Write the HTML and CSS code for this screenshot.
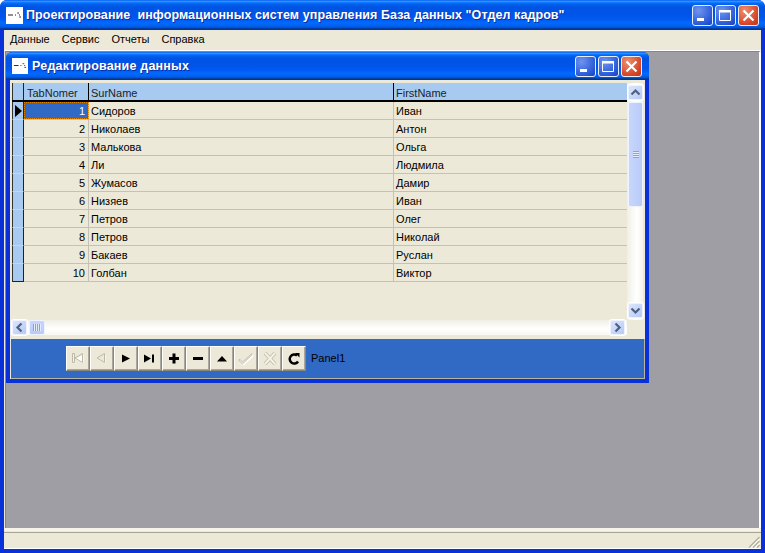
FILE: index.html
```html
<!DOCTYPE html>
<html lang="ru">
<head>
<meta charset="utf-8">
<title>Проектирование информационных систем</title>
<link rel="stylesheet" href="styles.css">
</head>
<body>
<svg class="defs" width="0" height="0">
  <symbol id="logo" viewBox="0 0 17 17"><rect width="17" height="17" fill="#fff"/><path d="M2 8h5M9 8h1M12 6h1M13 8h1M14 10h1" stroke="#222" stroke-width="1" fill="none"/><path d="M11 6h1M13 10h1" stroke="#2a8a3a" stroke-width="1"/></symbol>
  <symbol id="min" viewBox="0 0 19 19"><rect x="4" y="12" width="7" height="3" fill="#fff"/></symbol>
  <symbol id="max" viewBox="0 0 19 19"><path d="M3.500 4.500h11v10h-11z" fill="none" stroke="#fff"/><rect x="3" y="4" width="12" height="2.500" fill="#fff"/></symbol>
  <symbol id="cls" viewBox="0 0 19 19"><path d="M4.500 4.500l10 10M14.500 4.500l-10 10" stroke="#fff" stroke-width="2.200" fill="none"/></symbol>
  <symbol id="chev" viewBox="0 0 13 13"><path d="M2.500 8.500l4-4 4 4" fill="none" stroke="#4d6185" stroke-width="2.200"/></symbol>
</svg>
<div class="app">
  <header class="caption main-caption">
    <svg class="logo"><use href="#logo"/></svg>
    <span class="caption-text">Проектирование&nbsp; информационных систем управления База данных "Отдел кадров"</span>
    <div class="caption-btns">
      <span class="cbtn"><svg><use href="#min"/></svg></span>
      <span class="cbtn"><svg><use href="#max"/></svg></span>
      <span class="cbtn close"><svg><use href="#cls"/></svg></span>
    </div>
  </header>
  <div class="app-body">
    <nav class="menu">
      <span>Данные</span><span>Сервис</span><span>Отчеты</span><span>Справка</span>
    </nav>
    <main class="desktop">
      <section class="child">
        <header class="caption child-caption">
          <svg class="logo"><use href="#logo"/></svg>
          <span class="caption-text">Редактирование данных</span>
          <div class="caption-btns">
            <span class="cbtn"><svg><use href="#min"/></svg></span>
            <span class="cbtn"><svg><use href="#max"/></svg></span>
            <span class="cbtn close"><svg><use href="#cls"/></svg></span>
          </div>
        </header>
        <div class="child-body">
          <div class="grid-frame">
            <div class="grid-main">
              <div class="grid">
                <div class="row head"><div class="ind"></div><div class="c num-h">TabNomer</div><div class="c">SurName</div><div class="c">FirstName</div></div>
                <div class="row"><div class="ind"><i class="arrow"></i></div><div class="c num sel">1</div><div class="c">Сидоров</div><div class="c">Иван</div></div>
                <div class="row"><div class="ind"></div><div class="c num">2</div><div class="c">Николаев</div><div class="c">Антон</div></div>
                <div class="row"><div class="ind"></div><div class="c num">3</div><div class="c">Малькова</div><div class="c">Ольга</div></div>
                <div class="row"><div class="ind"></div><div class="c num">4</div><div class="c">Ли</div><div class="c">Людмила</div></div>
                <div class="row"><div class="ind"></div><div class="c num">5</div><div class="c">Жумасов</div><div class="c">Дамир</div></div>
                <div class="row"><div class="ind"></div><div class="c num">6</div><div class="c">Низяев</div><div class="c">Иван</div></div>
                <div class="row"><div class="ind"></div><div class="c num">7</div><div class="c">Петров</div><div class="c">Олег</div></div>
                <div class="row"><div class="ind"></div><div class="c num">8</div><div class="c">Петров</div><div class="c">Николай</div></div>
                <div class="row"><div class="ind"></div><div class="c num">9</div><div class="c">Бакаев</div><div class="c">Руслан</div></div>
                <div class="row"><div class="ind"></div><div class="c num">10</div><div class="c">Голбан</div><div class="c">Виктор</div></div>
              </div>
              <div class="vscroll">
                <span class="sbtn"><svg><use href="#chev"/></svg></span>
                <span class="vthumb"><i></i></span>
                <span class="vspace"></span>
                <span class="sbtn down"><svg><use href="#chev"/></svg></span>
              </div>
            </div>
            <div class="hbar">
              <div class="hscroll">
                <span class="sbtn left"><svg><use href="#chev"/></svg></span>
                <span class="hthumb"><i></i></span>
                <span class="hspace"></span>
                <span class="sbtn right"><svg><use href="#chev"/></svg></span>
              </div>
            </div>
          </div>
          <div class="panel">
            <div class="nav">
              <button class="nb"><svg viewBox="0 0 22 23"><path d="M6.500 7.500v9h1v-9zM16.500 7.500v9l-8-4.500z" fill="#fff"/><path d="M5.500 6.500h2v9h-2zM15.500 6.500v9l-7.500-4.500z" fill="none" stroke="#bdb9a8"/></svg></button>
              <button class="nb"><svg viewBox="0 0 22 23"><path d="M14.500 7.500v9l-8-4.500z" fill="#fff"/><path d="M13.500 6.500v9l-7.500-4.500z" fill="#ece9d8" stroke="#bdb9a8"/></svg></button>
              <button class="nb"><svg viewBox="0 0 22 23"><path d="M7 7.500l8 4-8 4z" fill="#000"/></svg></button>
              <button class="nb"><svg viewBox="0 0 22 23"><path d="M5 7.500l7 4-7 4zM13 7.500h2v8h-2z" fill="#000"/></svg></button>
              <button class="nb"><svg viewBox="0 0 22 23"><path d="M9.500 6.500h3v3.500h3.500v3h-3.500v3.500h-3v-3.500h-3.500v-3h3.500z" fill="#000"/></svg></button>
              <button class="nb"><svg viewBox="0 0 22 23"><rect x="6" y="10" width="10" height="3" fill="#000"/></svg></button>
              <button class="nb"><svg viewBox="0 0 22 23"><path d="M6 14.500l5-5.500 5 5.500z" fill="#000"/></svg></button>
              <button class="nb"><svg viewBox="0 0 22 23"><path d="M4.500 12.500l4 3.500 10-9-.5 3-9.500 8.500-4-3z" fill="#fff"/><path d="M4.500 12l3 3 9.500-8.500-1 2.500-8.500 8-3.500-3z" fill="#ece9d8" stroke="#bdb9a8" stroke-width=".8"/></svg></button>
              <button class="nb"><svg viewBox="0 0 22 23"><path d="M6 6l10 11M16 6L6 17" fill="none" stroke="#bdb9a8" stroke-width="3.500"/><path d="M6 6l10 11M16 6L6 17" fill="none" stroke="#f4f2e6" stroke-width="2"/></svg></button>
              <button class="nb"><svg viewBox="0 0 22 23"><path d="M15 14.500a4.500 4.500 0 1 1 -1-6" fill="none" stroke="#000" stroke-width="2.500"/><path d="M12 6h4.500v4.500z" fill="#000"/></svg></button>
            </div>
            <span class="panel-label">Panel1</span>
          </div>
        </div>
      </section>
    </main>
    <footer class="status"><svg class="grip" viewBox="0 0 12 12"><path d="M11.500 1L1 11.500M11.500 5L5 11.500M11.500 9L9 11.500" stroke="#b0ac9a" stroke-width="1.200" fill="none"/><path d="M11.500 3L3 11.500M11.500 7L7 11.500" stroke="#fff" stroke-width="1"/></svg></footer>
  </div>
</div>
</body>
</html>
```
FILE: styles.css
```css
* { box-sizing: border-box; }
html, body { margin: 0; padding: 0; }
body { width: 765px; height: 553px; overflow: hidden; font: 11px "Liberation Sans", Arial, sans-serif; color: #000; }
.defs { position: absolute; }
.app {
  width: 765px; height: 553px; display: flex; flex-direction: column;
  background: #0831d9; padding: 0 4px 4px; border-radius: 7px 7px 0 0;
}
.caption {
  display: flex; align-items: center; color: #fff; font-weight: bold;
  background: linear-gradient(#0058ee 0, #3593ff 4%, #288eff 6%, #127dff 8%, #036ffc 10%, #0262ee 14%, #0057e5 20%, #0054e3 24%, #0055eb 56%, #005bf5 66%, #026afe 76%, #0062ef 86%, #0052d6 92%, #0040ab 94%, #003092 100%);
}
.main-caption { height: 30px; margin: 0 -4px; padding: 0 6px; border-radius: 7px 7px 0 0; font-size: 12.500px; }
.logo { width: 17px; height: 17px; flex: none; }
.main-caption .caption-text { margin-left: 3px; letter-spacing: .08px; text-shadow: 1px 1px 0 #0a2fa0; }
.caption-btns { margin-left: auto; display: flex; gap: 2px; }
.cbtn {
  width: 21px; height: 21px; border: 1px solid #e8eef8; border-radius: 3px;
  background: radial-gradient(circle at 30% 25%, #6f94ee, #2a5ad8 70%, #1a40b8);
  display: block;
}
.cbtn svg { display: block; width: 19px; height: 19px; }
.cbtn.close { background: radial-gradient(circle at 30% 25%, #ee9070, #d8482a 65%, #c03412); }
.app-body { flex: 1; display: flex; flex-direction: column; min-height: 0; background: #ece9d8; }
.menu {
  height: 21px; background: #ece9d8; display: flex; gap: 12px; align-items: center;
  padding: 0 0 2px 6px; border-bottom: 1px solid #fff; font-size: 11px;
}
.desktop {
  flex: 1; position: relative; background: #9f9ea4; margin-left: 1px;
  border-style: solid; border-width: 1px 2px 0 1px;
  border-color: #8a8778 #fff #fff #8a8778;
}
.child {
  position: absolute; left: 0; top: 0; width: 643px; height: 331px;
  background: #0831d9; padding: 0 4px 4px; border-radius: 6px 6px 0 0;
  display: flex; flex-direction: column;
}
.child-caption { height: 28px; margin: 0 -4px; padding: 0 7px 0 6px; border-radius: 6px 6px 0 0; font-size: 12.500px; }
.child-caption .logo { width: 16px; height: 16px; margin-right: 4px; }
.child-caption .caption-text { letter-spacing: .2px; text-shadow: 1px 1px 0 #0a2fa0; }
.child-body { flex: 1; display: flex; flex-direction: column; background: #ece9d8; padding: 3px 0 0 1px; min-height: 0; }
.grid-frame { flex: 1; display: flex; flex-direction: column; padding-left: 1px; min-height: 0; }
.grid-main { flex: 1; display: flex; min-height: 0; }
.grid { width: 615px; flex: none; background: #ece9d8; }
.row { display: grid; grid-template-columns: 12px 65px 305px 233px; height: 18px; border-bottom: 1px solid #c5c2b4; line-height: 17px; }
.row.head { height: 19px; background: #a6caf0; border-bottom: 2px solid #000; line-height: 18px; color: #222; }
.row.head .c { border-right: 1px solid #000; }
.row.head .c:last-child { border-right: 0; }
.ind { background: #a6caf0; border-left: 1px solid #333; border-right: 1px solid #222; border-bottom: 1px solid #d8d5c6; margin-bottom: -1px; position: relative; }
.row.head .ind { border-bottom: 0; margin-bottom: 0; }
.row:last-child .ind { border-bottom-color: #222; }
.c { padding: 1px 3px 0 2px; border-right: 1px solid #c5c2b4; white-space: nowrap; overflow: hidden; }
.c:last-child { border-right: 0; }
.c.num-h { padding-left: 3px; }
.num { text-align: right; }
.sel { background: #316ac5; color: #fff; outline: 1px dotted #e08000; outline-offset: -1px; }
.arrow { position: absolute; left: 2px; top: 3px; border-left: 7px solid #000; border-top: 6px solid transparent; border-bottom: 6px solid transparent; }
.vscroll { width: 16px; flex: none; display: flex; flex-direction: column; padding: 2px 0 2px 1px; background: linear-gradient(90deg, #f0efe6, #fff 60%, #f4f3ea); gap: 2px; }
.sbtn {
  width: 15px; height: 15px; flex: none; display: block; border: 1px solid #eef3ff; border-radius: 2px;
  background: linear-gradient(135deg, #dce6fd, #b6c9f6);
  box-shadow: 0 0 0 1px #fff;
}
.sbtn svg { display: block; width: 13px; height: 13px; }
.sbtn.down svg { transform: rotate(180deg); }
.sbtn.left svg { transform: rotate(-90deg); }
.sbtn.right svg { transform: rotate(90deg); }
.vthumb { height: 105px; flex: none; display: flex; align-items: center; justify-content: center; background: linear-gradient(90deg, #c8d6fb, #b8cbf8); border: 1px solid #eef3ff; border-radius: 2px; width: 15px; }
.vthumb i { width: 6px; height: 7px; background: repeating-linear-gradient(#8aa2dc 0 1px, #e4ebfd 1px 2px); }
.vspace { flex: 1; }
.hbar { height: 18px; flex: none; }
.hscroll { width: 615px; height: 15px; display: flex; padding-right: 2px; gap: 2px; background: linear-gradient(#f0efe6, #fff 60%, #f8f7f0); }
.hthumb { width: 16px; height: 15px; flex: none; display: flex; align-items: center; justify-content: center; background: linear-gradient(#c8d6fb, #b8cbf8); border: 1px solid #eef3ff; border-radius: 2px; }
.hthumb i { width: 8px; height: 7px; background: repeating-linear-gradient(90deg, #8aa2dc 0 1px, #e4ebfd 1px 2px); }
.hspace { flex: 1; }
.panel {
  height: 40px; flex: none; background: #316ac5; margin-top: 1px; border-bottom: 1px solid #b8b4a0; border-right: 1px solid #b8b4a0;
  display: flex; align-items: flex-start; padding: 7px 0 0 55px;
}
.nav { display: flex; }
.nb {
  width: 24px; height: 25px; padding: 0; background: #ece9d8; display: block;
  border: 1px solid; border-color: #fff #8a8778 #8a8778 #fff; box-shadow: inset -1px -1px 0 #aca899;
}
.nb svg { display: block; width: 22px; height: 23px; }
.panel-label { margin-left: 5px; line-height: 25px; }
.status {
  height: 21px; flex: none; position: relative;
  background: linear-gradient(#f6f4e8 0 3px, #ece9d8 3px 4px, #a9a594 4px 5px, #ece9d8 5px 20px, #fff 20px);
}
.grip { position: absolute; right: 1px; bottom: 1px; width: 12px; height: 12px; }
```
